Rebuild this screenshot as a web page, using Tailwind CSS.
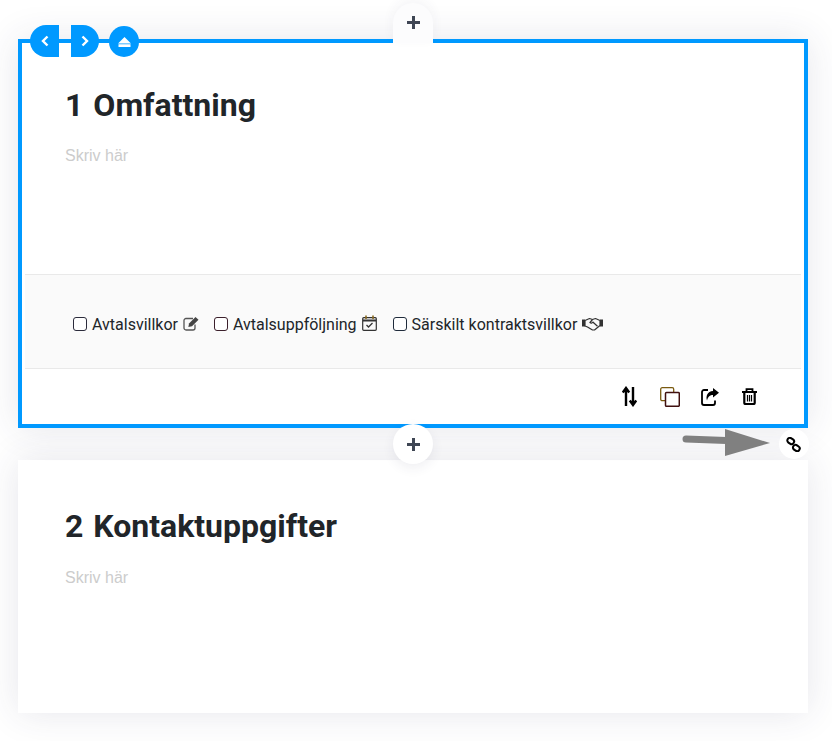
<!DOCTYPE html>
<html lang="en">
<head>
    <meta charset="UTF-8">
    <title>Omfattning</title>
    <script src="https://cdn.jsdelivr.net/npm/@tailwindcss/browser@4"></script>
</head>
<body class="bg-white font-['Roboto',sans-serif] text-[#212529] overflow-hidden">
<div class="relative h-[741px] w-[832px] overflow-hidden px-[18px] pt-[39px]">

    <!-- first section, selected -->
    <section class="relative h-[389px] w-[790px] border-4 border-[#0099ff] bg-white shadow-[0_0_35px_rgba(50,50,93,0.12)]">
        <div class="h-[231px] pl-[43px] pt-[42px]">
            <h2 class="text-[32px] font-bold leading-[40px] text-[#212529] [word-spacing:2px]">1 Omfattning</h2>
            <p class="mt-[19px] font-['Liberation_Sans',sans-serif] text-[16px] leading-[24px] text-[#cccccc]">Skriv här</p>
        </div>
        <div class="mx-[3px] flex h-[95px] items-center border-y border-[#e9e9e9] bg-[#fafafa] pl-[48px] pt-[5px] text-[16px] text-[#212529]">
            <label class="flex items-center">
                <span class="mr-[5px] h-[14px] w-[14px] rounded-[3px] border border-[#2b2b3b] bg-white"></span><span class="pt-[1px]">Avtalsvillkor</span>
                <svg class="ml-[5px] mt-[-2px]" width="17" height="15" viewBox="0 0 17 15" fill="none">
                    <path d="M12 8.500v3.500a2 2 0 0 1-2 2H3a2 2 0 0 1-2-2V4.500a2 2 0 0 1 2-2h7" stroke="#555" stroke-width="1.300"/>
                    <path d="M6 7.500 12.500 1l3 2.800L9 10.300l-3.600.7z" fill="#444"/>
                </svg>
            </label>
            <label class="ml-[14px] flex items-center">
                <span class="mr-[5px] h-[14px] w-[14px] rounded-[3px] border border-[#3b1f2b] bg-white"></span><span class="pt-[1px]">Avtalsuppföljning</span>
                <svg class="ml-[5px] mt-[-2px]" width="15" height="16" viewBox="0 0 15 16" fill="none">
                    <rect x="0.700" y="2.700" width="13.600" height="12.600" rx="1" stroke="#333" stroke-width="1.200"/>
                    <path d="M1 5.500h13" stroke="#333" stroke-width="2"/>
                    <path d="M4 0.500v3.500M11 0.500v3.500" stroke="#8a6a20" stroke-width="1.600"/>
                    <path d="m4.500 10 2 2 4-4" stroke="#333" stroke-width="1.300"/>
                </svg>
            </label>
            <label class="ml-[16px] flex items-center">
                <span class="mr-[5px] h-[14px] w-[14px] rounded-[3px] border border-[#1f2b3b] bg-white"></span><span class="pt-[1px]">Särskilt kontraktsvillkor</span>
                <svg class="ml-[5px]" width="21" height="14" viewBox="0 0 21 14" fill="none">
                    <path d="M0 2.500h3v7H0zM18 2.500h3v7h-3z" fill="#333"/>
                    <path d="M3 3.500 7.500 1.500l3 1 3-1 4.500 2v5l-5.500 4.500h-2L5.500 10 3 9z" stroke="#333" stroke-width="1.200" stroke-linejoin="round"/>
                    <path d="M10.500 2.500 8 5.500c1 1 2 .8 3-.3l4.500 4" stroke="#333" stroke-width="1.200"/>
                </svg>
            </label>
        </div>
        <div class="flex h-[55px] items-center justify-end pr-[47px] text-black">
            <svg width="15" height="21" viewBox="0 0 15 21" fill="none" stroke="#000" stroke-width="2.400">
                <path d="M4 20V3M.8 6.500 4 2l3.200 4.500"/>
                <path d="M11 1v17M7.800 14.500 11 19l3.200-4.500"/>
            </svg>
            <svg class="ml-[23px]" width="20" height="20" viewBox="0 0 20 20" fill="none">
                <rect x="0.700" y="0.700" width="13" height="13" rx="1.500" stroke="#7a5a10" stroke-width="1.300"/>
                <rect x="5.500" y="5.500" width="13.800" height="13.800" rx="1" fill="#fff" stroke="#401010" stroke-width="1.500"/>
            </svg>
            <svg class="ml-[21px]" width="18" height="18" viewBox="0 0 18 18" fill="none">
                <path d="M7 2H3a2 2 0 0 0-2 2V15a2 2 0 0 0 2 2h9a2 2 0 0 0 2-2v-2.500" stroke="#000" stroke-width="1.800"/>
                <path d="M12 0 18 4.800l-6 4.700V7C9 7 7 8.500 6 12.500c-1.500-4.500.5-9 6-9.500z" fill="#000"/>
            </svg>
            <svg class="ml-[23px]" width="15" height="17" viewBox="0 0 15 17" fill="none" stroke="#000">
                <path d="M0 4h15" stroke-width="2"/>
                <path d="M4.500 4V1.200h6V4" stroke-width="1.800"/>
                <path d="M2.300 4.500V15a1.200 1.200 0 0 0 1.200 1h8a1.200 1.200 0 0 0 1.200-1V4.500" stroke-width="2.200"/>
                <path d="M5.500 7v6.500M7.500 7v6.500M9.500 7v6.500" stroke-width="1.200"/>
            </svg>
        </div>

        <!-- move and collapse buttons on the top border -->
        <div class="absolute left-[8px] top-[-18px] flex items-start">
            <button class="flex h-[32px] w-[29px] items-center justify-center rounded-l-full bg-[#0099ff]">
                <svg width="10" height="12" viewBox="0 0 10 12" fill="none" stroke="#fff" stroke-width="2.400"><path d="M7.500 1.500 3 6l4.500 4.500"/></svg>
            </button>
            <button class="ml-[12px] flex h-[32px] w-[28px] items-center justify-center rounded-r-full bg-[#0099ff]">
                <svg width="10" height="12" viewBox="0 0 10 12" fill="none" stroke="#fff" stroke-width="2.400"><path d="M2.500 1.500 7 6l-4.500 4.500"/></svg>
            </button>
            <button class="ml-[10px] mt-[1px] flex h-[31px] w-[30px] items-center justify-center rounded-full bg-[#0099ff]">
                <svg width="13" height="10" viewBox="0 0 13 10" fill="#fff"><path d="M6.500 0 13 6.500H0zM.5 7.300h12V10H.5z"/></svg>
            </button>
        </div>

        <!-- add section, above -->
        <button class="absolute left-[371px] top-[-40px] flex h-[40px] w-[40px] items-center justify-center rounded-t-full bg-[#fcfcfd] pb-[2px] shadow-[0_-4px_12px_rgba(50,50,93,0.05)]">
            <svg width="13" height="13" viewBox="0 0 13 13" fill="#3f4654"><path d="M5 0h3v5h5v3H8v5H5V8H0V5h5z"/></svg>
        </button>
        <!-- add section, below -->
        <button class="absolute left-[371px] top-[381px] flex h-[40px] w-[40px] items-center justify-center rounded-full bg-white shadow-[0_4px_12px_rgba(50,50,93,0.08)]">
            <svg width="13" height="13" viewBox="0 0 13 13" fill="#3f4654"><path d="M5 0h3v5h5v3H8v5H5V8H0V5h5z"/></svg>
        </button>
    </section>

    <!-- second section -->
    <section class="mt-[32px] h-[253px] w-[790px] bg-white pl-[47px] pt-[46px] shadow-[0_0_35px_rgba(50,50,93,0.12)]">
        <h2 class="text-[32px] font-bold leading-[40px] text-[#212529] [word-spacing:2px]">2 Kontaktuppgifter</h2>
        <p class="mt-[20px] font-['Liberation_Sans',sans-serif] text-[16px] leading-[24px] text-[#cccccc]">Skriv här</p>
    </section>

    <!-- arrow pointing at the link button -->
    <svg class="absolute left-[680px] top-[427px]" width="92" height="30" viewBox="0 0 92 30" fill="#808080">
        <path d="M6 8.500 46 10v7L6 15.500a3.500 3.500 0 0 1 0-7z"/>
        <path d="M45 2 90 16 45 29z"/>
    </svg>
    <button class="absolute left-[779px] top-[429px] flex h-[30px] w-[30px] items-center justify-center rounded-full bg-white pr-[1px]">
        <svg width="15" height="15" viewBox="0 0 16 16" fill="none" stroke="#000" stroke-width="2.200">
            <rect x="1.300" y="1.500" width="7.500" height="5.500" rx="2.700" transform="rotate(35 5 4.200)"/>
            <rect x="7.300" y="9" width="7.500" height="5.500" rx="2.700" transform="rotate(35 11 11.700)"/>
        </svg>
    </button>
</div>
</body>
</html>
